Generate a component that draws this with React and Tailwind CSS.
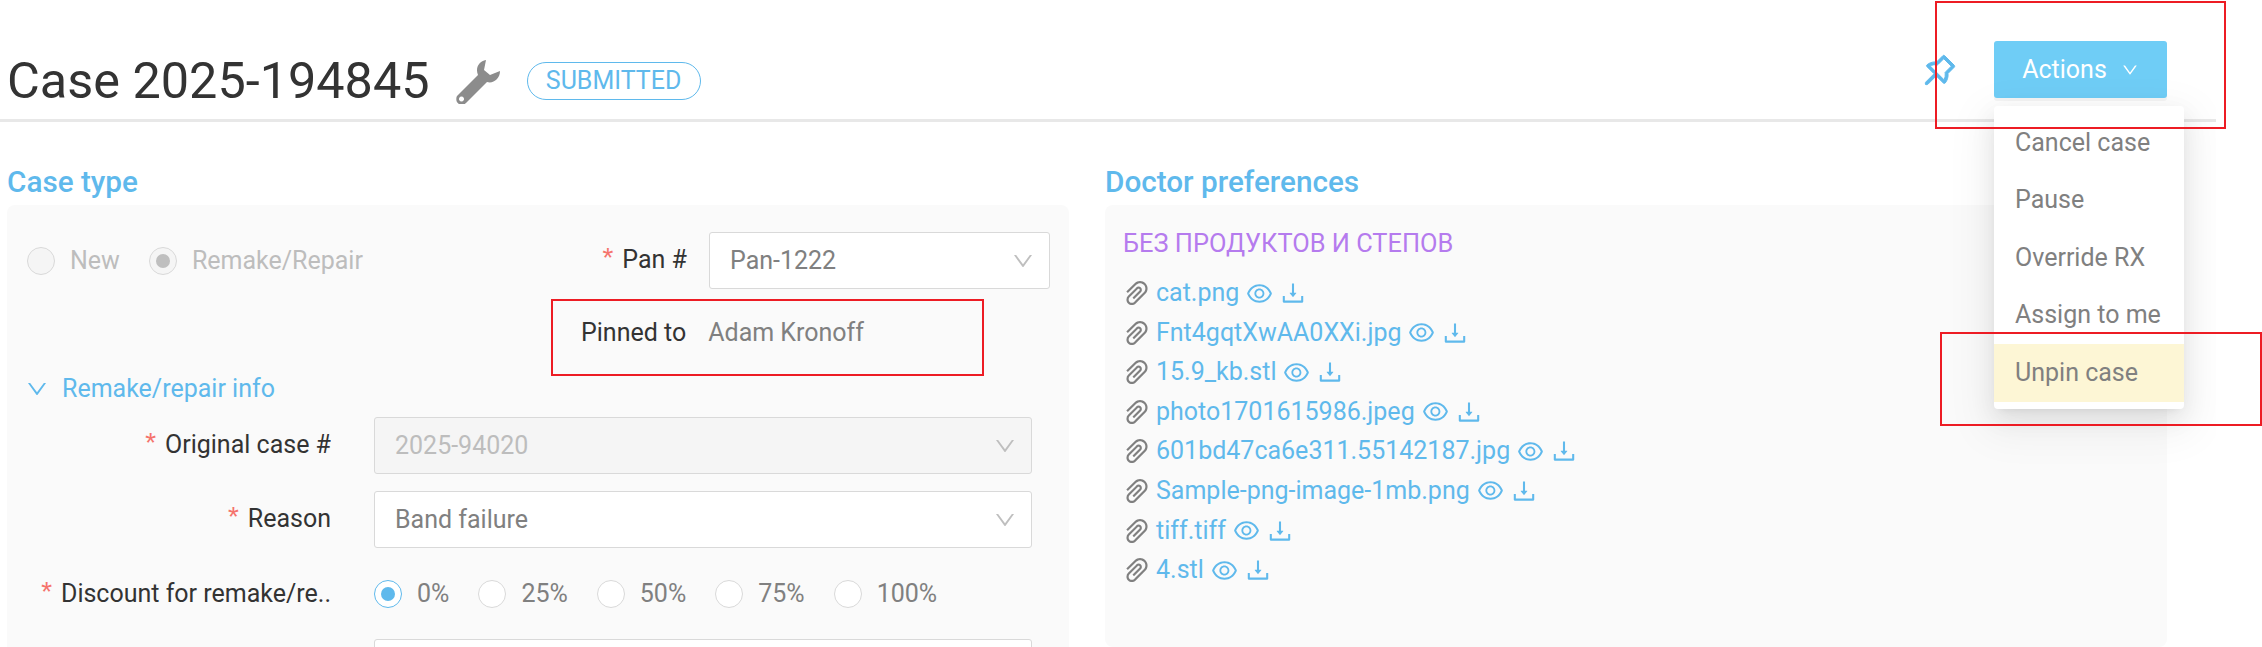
import { AiOutlinePushpin, AiOutlineDown, AiOutlinePaperClip, AiOutlineEye, AiOutlineDownload } from "react-icons/ai";

const files = [
  "cat.png",
  "Fnt4gqtXwAA0XXi.jpg",
  "15.9_kb.stl",
  "photo1701615986.jpeg",
  "601bd47ca6e311.55142187.jpg",
  "Sample-png-image-1mb.png",
  "tiff.tiff",
  "4.stl",
];

const actions = ["Cancel case", "Pause", "Override RX", "Assign to me"];

function Wrench() {
  return (
    <svg className="ml-[26px] text-[#8c8c8c]" width="45" height="45" viewBox="15 8 45 45" fill="currentColor" fillRule="evenodd">
      <path d="M45 9 L43 19 L49 24 L59 20 C59 28 52 33 46 31 L25 52 C22 55 17 54 15.5 50 C15 47 15.5 45 17 44 L37 24 C34 17 38 10 45 9 Z M20.5 45.5 a2.5 2.5 0 1 0 .01 0 Z" />
    </svg>
  );
}

function Radio({ checked, disabled, label, className }) {
  let ring = "border-[#d9d9d9] bg-white";
  if (disabled) ring = "border-[#d9d9d9] bg-[#f5f5f5]";
  if (checked && !disabled) ring = "border-[#5fb9ec] bg-white";
  return (
    <div className={`flex items-center ${className}`}>
      <span className={`flex h-[28px] w-[28px] items-center justify-center rounded-full border ${ring}`}>
        {checked && <span className={`h-[14px] w-[14px] rounded-full ${disabled ? "bg-[#bfbfbf]" : "bg-[#5fb9ec]"}`} />}
      </span>
      <span className={`ml-[15px] ${disabled ? "text-[#bdbdbd]" : "text-[#808080]"}`}>{label}</span>
    </div>
  );
}

function Select({ value, disabled, className }) {
  return (
    <div className={`flex h-[57px] items-center justify-between rounded-[3px] border border-[#d9d9d9] pl-[20px] pr-[14px] ${disabled ? "bg-[#f5f5f5] text-[#bdbdbd]" : "bg-white text-[#808080]"} ${className}`}>
      <span>{value}</span>
      <AiOutlineDown className="text-[#bfbfbf]" size={24} />
    </div>
  );
}

function Asterisk() {
  return <span className="mr-[6px] font-['Liberation_Mono',monospace] text-[28px] text-[#f5736c]">*</span>;
}

function Label({ children }) {
  return (
    <div className="w-[324px] shrink-0 truncate text-right text-[#333]">
      <Asterisk />
      {children}
    </div>
  );
}

export default function App() {
  return (
    <div className="relative h-[647px] w-[2262px] overflow-hidden bg-white font-['Roboto',sans-serif] text-[25px] leading-[32px]">
      <div className="relative h-full w-[2216px] overflow-hidden">
        <header className="flex h-[122px] border-b-[3px] border-[#e8e8e8] pl-[7px] pr-[49px]">
          <div className="mt-[53px] flex h-[56px] items-center">
            <h1 className="text-[50.4px] leading-[56px] text-[#333]">Case 2025-194845</h1>
            <Wrench />
            <span className="ml-[26px] flex h-[38px] w-[174px] items-center justify-center rounded-full border border-[#5fb9ec] text-[#5fb9ec]">SUBMITTED</span>
          </div>
          <div className="ml-auto mt-[41px] flex h-[57px] items-center">
            <AiOutlinePushpin className="text-[#5fb9ec]" size={40} stroke="currentColor" strokeWidth={25} />
            <button className="ml-[34px] flex h-[57px] w-[173px] items-center justify-center gap-[14px] rounded-[3px] bg-[#6fcdf6] text-white shadow-[0_3px_0_rgba(0,0,0,0.04)]">
              Actions
              <AiOutlineDown size={18} />
            </button>
          </div>
        </header>

        <main className="flex gap-[36px] pl-[7px]">
          <section className="w-[1062px]">
            <h2 className="flex h-[83px] items-end pb-[5px] text-[29.7px] font-medium leading-[36px] text-[#5fb9ec]">Case type</h2>
            <div className="h-[460px] rounded-[8px] bg-[#fafafa] pt-[27px]">
              <div className="flex h-[57px] items-center pl-[20px] pr-[19px]">
                <Radio disabled label="New" />
                <Radio disabled checked label="Remake/Repair" className="ml-[29px]" />
                <div className="ml-auto text-[#333]">
                  <Asterisk />Pan #
                </div>
                <Select value="Pan-1222" className="ml-[22px] w-[341px]" />
              </div>
              <div className="mt-[28px] flex h-[32px] items-center pl-[574px]">
                <span className="text-[#333]">Pinned to</span>
                <span className="ml-[22px] text-[#808080]">Adam Kronoff</span>
              </div>
              <div className="mt-[24px] flex h-[32px] items-center pl-[18px] text-[#5fb9ec]">
                <AiOutlineDown size={24} />
                <span className="ml-[13px]">Remake/repair info</span>
              </div>
              <div className="mt-[12px] flex items-center">
                <Label>Original case #</Label>
                <Select disabled value="2025-94020" className="ml-[43px] w-[658px]" />
              </div>
              <div className="mt-[17px] flex items-center">
                <Label>Reason</Label>
                <Select value="Band failure" className="ml-[43px] w-[658px]" />
              </div>
              <div className="mt-[32px] flex h-[28px] items-center">
                <Label>Discount for remake/re..</Label>
                <Radio checked label="0%" className="ml-[43px]" />
                <Radio label="25%" className="ml-[29px]" />
                <Radio label="50%" className="ml-[29px]" />
                <Radio label="75%" className="ml-[29px]" />
                <Radio label="100%" className="ml-[29px]" />
              </div>
              <div className="mt-[31px] flex">
                <Select value="" className="ml-[367px] w-[658px]" />
              </div>
            </div>
          </section>

          <section className="w-[1062px]">
            <h2 className="flex h-[83px] items-end pb-[5px] text-[29.7px] font-medium leading-[36px] text-[#5fb9ec]">Doctor preferences</h2>
            <div className="h-[442px] rounded-[8px] bg-[#fafafa] pl-[18px] pt-[21px]">
              <div className="mt-[1px] h-[32px] text-[25.4px] text-[#b57bee]">БЕЗ ПРОДУКТОВ И СТЕПОВ</div>
              <ul className="mt-[18px] flex flex-col gap-[7.6px]">
                {files.map((name) => (
                  <li key={name} className="flex h-[32px] items-center text-[#5fb9ec]">
                    <AiOutlinePaperClip className="-ml-[2px] text-[#808080]" size={32} />
                    <span className="ml-[3px]">{name}</span>
                    <AiOutlineEye className="ml-[6px]" size={29} />
                    <AiOutlineDownload className="ml-[5px]" size={28} />
                  </li>
                ))}
              </ul>
            </div>
          </section>
        </main>

        <div className="absolute left-[1994px] top-[106px] h-[303px] w-[190px] rounded-[4px] bg-white pt-[8px] text-[#808080] shadow-[0_14px_42px_12px_rgba(0,0,0,0.05),0_9px_24px_rgba(0,0,0,0.08),0_4px_9px_-6px_rgba(0,0,0,0.12)]">
          {actions.map((a) => (
            <div key={a} className="flex h-[57.5px] items-center pl-[21px]">{a}</div>
          ))}
          <div className="flex h-[58px] items-center bg-[#fdf6d5] pl-[21px]">Unpin case</div>
        </div>
      </div>

      <div className="absolute left-[1935px] top-[1px] h-[128px] w-[291px] border-2 border-[#ed1c24]" />
      <div className="absolute left-[551px] top-[299px] h-[77px] w-[433px] border-2 border-[#ed1c24]" />
      <div className="absolute left-[1940px] top-[332px] h-[94px] w-[322px] border-2 border-[#ed1c24]" />
    </div>
  );
}
